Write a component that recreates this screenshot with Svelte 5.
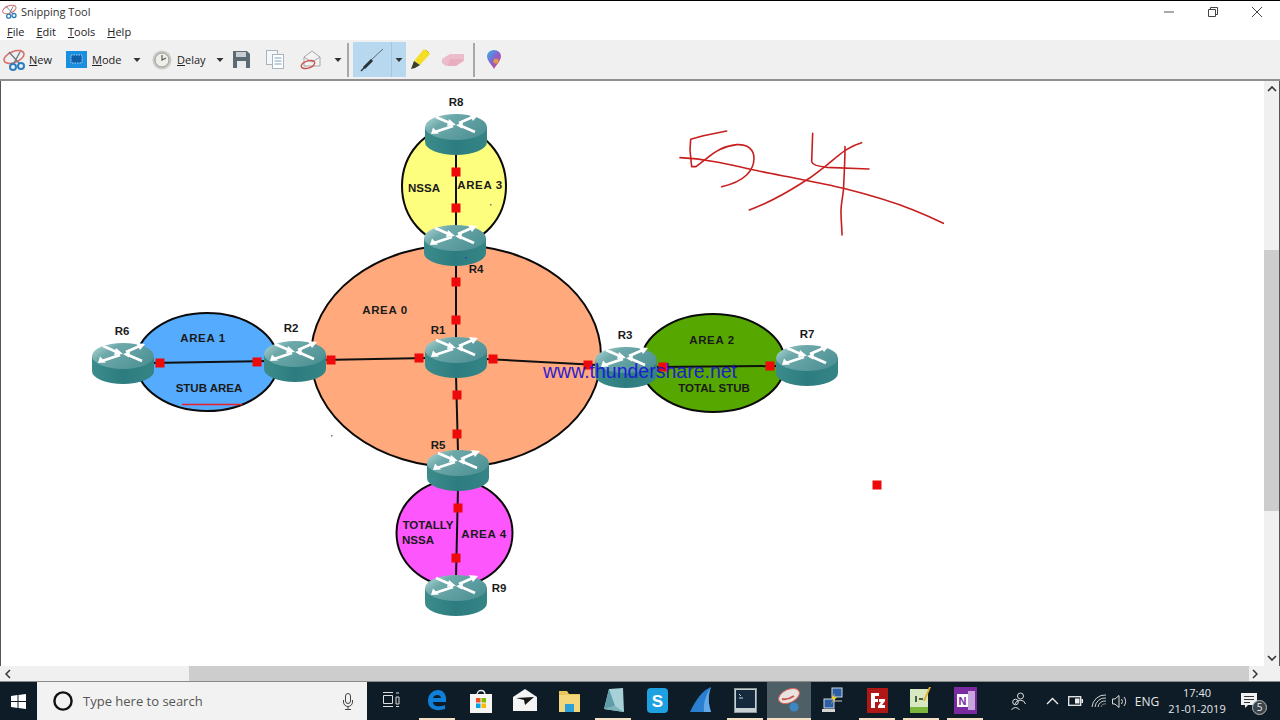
<script>
  const routers = [
    { x: 425, y: 114 }, { x: 424, y: 225 }, { x: 425, y: 337 }, { x: 427, y: 450 }, { x: 425, y: 575 },
    { x: 92, y: 343 }, { x: 264, y: 341 }, { x: 595, y: 347 }, { x: 776, y: 345 }
  ];
  const areas = [
    { cx: 456, cy: 356, rx: 145, ry: 111, fill: '#ffa97c' },
    { cx: 454, cy: 186, rx: 52, ry: 58, fill: '#fdfd7e' },
    { cx: 207, cy: 362, rx: 71, ry: 49, fill: '#55abfd' },
    { cx: 713, cy: 363, rx: 72, ry: 49, fill: '#56a800' },
    { cx: 454.5, cy: 533, rx: 58, ry: 53, fill: '#fd56fd' }
  ];
  const links = [
    [456, 150, 456, 230], [456, 262, 456, 340], [456, 375, 458, 452], [458, 488, 456, 578],
    [150, 363, 268, 361], [322, 360, 428, 358], [485, 359, 598, 365], [655, 367, 778, 366]
  ];
  const marks = [
    [456, 172], [456, 208], [456, 282], [456, 320], [457, 395], [457, 434], [458, 508], [456, 558],
    [160, 363], [257, 362], [331, 360], [419, 358], [493, 359], [588, 365], [663, 367], [770, 366], [877, 485]
  ];
  const specks = [
    [331, 435, '#777'], [490, 204, '#777'], [465, 257, '#2040c0']
  ];
  const labels = [
    ['R8', 456, 106], ['R4', 476, 273], ['R1', 438, 334], ['R5', 438, 449], ['R9', 499, 592],
    ['R6', 122, 335], ['R2', 291, 332], ['R3', 625, 339], ['R7', 807, 338],
    ['STUB AREA', 209, 392], ['TOTAL STUB', 714, 392], ['NSSA', 424, 192],
    ['TOTALLY', 428, 529], ['NSSA', 418, 544]
  ];
  const areaLabels = [
    ['AREA 0', 385, 314], ['AREA 3', 480, 189], ['AREA 1', 203, 342], ['AREA 2', 712, 344], ['AREA 4', 484, 538]
  ];
  const scribbles = [
    'M170 33 L100 47 L62 58 L60 90 L65 140 L78 140 L110 115 C135 95 160 78 200 74 C235 72 252 90 252 115 C252 150 225 185 155 200',
    'M30 113 C130 118 200 140 300 160 S460 190 520 205 S680 250 730 270 S790 295 820 310',
    'M428 40 L425 125 Q428 138 470 142 L597 147',
    'M575 68 C530 80 500 112 465 140 C440 158 430 168 410 180 C370 205 320 240 238 270',
    'M525 80 C525 130 522 170 521 200 C520 230 512 250 513 280 C514 310 516 330 516 345'
  ];
</script>

{#snippet snipIcon(w, h)}
  <svg width={w} height={h} viewBox="0 0 24 22">
    <ellipse cx="11" cy="8" rx="10.5" ry="5.5" transform="rotate(-22 11 8)" fill="none" stroke="#d9706c" stroke-width="1.6" />
    <path d="M6 3 L16 14 M17 3 L11 14" stroke="#6d7c86" stroke-width="1.4" fill="none" />
    <circle cx="18" cy="17" r="3" fill="none" stroke="#2b7fc0" stroke-width="2" />
    <circle cx="10" cy="18" r="3" fill="none" stroke="#2b7fc0" stroke-width="2" />
  </svg>
{/snippet}

{#snippet caret()}
  <svg class="caret" width="10" height="6" viewBox="0 0 10 6"><path d="M1.5 1 H8.5 L5 5 Z" fill="#333" /></svg>
{/snippet}

<div class="screen">
  <header class="title">
    {@render snipIcon(16, 15)}
    <span class="title-text">Snipping Tool</span>
    <div class="win-btns">
      <svg width="12" height="12" viewBox="0 0 12 12"><path d="M1 6 H11" stroke="#555" /></svg>
      <svg width="12" height="12" viewBox="0 0 12 12"><path d="M1.5 3.5 H8.5 V10.5 H1.5 Z M3.5 3.5 V1.5 H10.5 V8.5 H8.5" fill="none" stroke="#444" /></svg>
      <svg width="12" height="12" viewBox="0 0 12 12"><path d="M1 1 L11 11 M11 1 L1 11" stroke="#444" /></svg>
    </div>
  </header>

  <nav class="menu">
    <span><u>F</u>ile</span><span><u>E</u>dit</span><span><u>T</u>ools</span><span><u>H</u>elp</span>
  </nav>

  <div class="toolbar">
    <div class="tool w-new">{@render snipIcon(24, 22)}<span><u>N</u>ew</span></div>
    <div class="tool w-mode">
      <svg width="21" height="17" viewBox="0 0 21 17"><rect width="21" height="17" fill="#1a8fe0" /><rect x="5" y="4" width="11" height="8" fill="#0f5fa8" stroke="#9fd0f2" stroke-dasharray="1.5 1" /></svg>
      <span><u>M</u>ode</span>
    </div>
    <div class="caret-box">{@render caret()}</div>
    <div class="tool w-delay ml10">
      <svg width="20" height="20" viewBox="0 0 20 20"><circle cx="10" cy="10" r="9.5" fill="#c9c9c5" /><circle cx="10" cy="10" r="7" fill="#efefea" stroke="#9a9a96" /><path d="M10 5 V10 L14 8" fill="none" stroke="#555" stroke-width="1.2" /></svg>
      <span><u>D</u>elay</span>
    </div>
    <div class="caret-box">{@render caret()}</div>
    <svg class="ml8" width="17" height="17" viewBox="0 0 17 17"><path d="M0 0 H14 L17 3 V17 H0 Z" fill="#5c6a73" /><rect x="3" y="1" width="10" height="5" fill="#c8ced2" /><rect x="4" y="10" width="9" height="7" fill="#e8eaec" /></svg>
    <svg class="ml16" width="18" height="19" viewBox="0 0 18 19"><rect x="0.5" y="0.5" width="11" height="14" fill="#f4f6f8" stroke="#a9b4bc" /><rect x="6.5" y="4.5" width="11" height="14" fill="#fff" stroke="#a9b4bc" /><path d="M8.5 8 H15.5 M8.5 11 H15.5 M8.5 14 H15.5" stroke="#7ba3c4" /></svg>
    <svg class="ml16" width="22" height="21" viewBox="0 0 22 21"><path d="M4 8 L12 2 L20 8 V17 H4 Z" fill="#f3f3f3" stroke="#a6a6a6" /><path d="M4 8 L12 13 L20 8" fill="none" stroke="#a6a6a6" /><ellipse cx="8" cy="15.5" rx="7" ry="3.6" transform="rotate(-18 8 15.5)" fill="none" stroke="#c9544f" stroke-width="1.4" /></svg>
    <div class="caret-box ml11">{@render caret()}</div>
    <i class="sep ml4"></i>
    <div class="pen-btn">
      <div class="pen-main">
        <svg width="24" height="24" viewBox="0 0 24 24"><path d="M23 1 L10 13" stroke="#5d6b74" stroke-width="1" /><path d="M12 12 L4 20" stroke="#27333a" stroke-width="3" /><path d="M5 19 L1 23" stroke="#27333a" stroke-width="1.4" /></svg>
      </div>
      <div class="pen-arrow">{@render caret()}</div>
    </div>
    <svg class="ml4" width="20" height="21" viewBox="0 0 20 21"><path d="M14 0 L20 5 L10 16 L4 12 Z" fill="#f4dd25" /><path d="M4 12 L10 16 L5 19 L1 20 Z" fill="#3b3f2a" /><path d="M16 1 L19 4" stroke="#c9b30f" /></svg>
    <svg class="ml12" width="22" height="14" viewBox="0 0 22 14"><path d="M0 6 L8 1 H22 V8 L14 13 H4 L0 10 Z" fill="#edbccb" /><path d="M8 6 H22 L14 13 H6 Z" fill="#e3a8bb" opacity="0.7" /></svg>
    <i class="sep ml9"></i>
    <svg class="ml12" width="14" height="19" viewBox="0 0 14 19">
      <defs><linearGradient id="drop" x1="0" y1="0" x2="1" y2="1"><stop offset="0" stop-color="#2fb6e8" /><stop offset="0.5" stop-color="#8a5fd0" /><stop offset="1" stop-color="#e8455f" /></linearGradient></defs>
      <path d="M7 19 C5 15 0 11 0 6 A7 6 0 0 1 14 6 C14 11 9 15 7 19 Z" fill="url(#drop)" />
      <circle cx="9" cy="11" r="2.6" fill="#f2a92e" opacity="0.8" />
    </svg>
  </div>

  <main class="body">
    <div class="stage">
      <svg class="diagram" width="1263" height="585" viewBox="0 81 1263 585">
        <defs>
          <linearGradient id="rtop" x1="0" y1="0" x2="1" y2="0.6">
            <stop offset="0" stop-color="#b9dcdb" /><stop offset="0.35" stop-color="#6ea9aa" /><stop offset="1" stop-color="#4f9396" />
          </linearGradient>
          <linearGradient id="rbody" x1="0" y1="0" x2="1" y2="0">
            <stop offset="0" stop-color="#3c8c8c" /><stop offset="0.5" stop-color="#2d7d80" /><stop offset="1" stop-color="#358587" />
          </linearGradient>
          <g id="router">
            <path d="M0 13 V28 A31 13 0 0 0 62 28 V13 Z" fill="url(#rbody)" />
            <ellipse cx="31" cy="13" rx="31" ry="13" fill="url(#rtop)" />
            <path d="M11 3 L27 10 M50 2 L34 9 M10 18 L28 12 M50 18 L34 11" stroke="#fff" stroke-width="2.8" />
            <path d="M24 5 L31 11 L22 12 Z M44 0 L53 1 L48 7 Z M8 13.5 L6 20 L14 19.5 Z M38 8.5 L31 11 L37 14.5 Z" fill="#fff" />
          </g>
        </defs>

        {#each areas as a}
          <ellipse cx={a.cx} cy={a.cy} rx={a.rx} ry={a.ry} fill={a.fill} stroke="#0a0a0a" stroke-width="2" />
        {/each}
        {#each links as l}
          <line x1={l[0]} y1={l[1]} x2={l[2]} y2={l[3]} stroke="#101010" stroke-width="2" />
        {/each}
        {#each routers as r}
          <use href="#router" x={r.x} y={r.y} />
        {/each}
        {#each marks as m}
          <rect x={m[0] - 4.5} y={m[1] - 4.5} width="9" height="9" fill="#ee0a0a" />
        {/each}
        {#each specks as s}
          <rect x={s[0]} y={s[1]} width="1.5" height="1.5" fill={s[2]} />
        {/each}
        {#each labels as t}
          <text x={t[1]} y={t[2]} class="lbl">{t[0]}</text>
        {/each}
        {#each areaLabels as t}
          <text x={t[1]} y={t[2]} class="lbl big">{t[0]}</text>
        {/each}
        <line x1="182" y1="404.5" x2="242" y2="404.5" stroke="#e8202c" stroke-width="1.6" />
        <g transform="translate(670 120) scale(0.3333)" fill="none" stroke="#c81e1e" stroke-width="4.8" stroke-linecap="round" stroke-linejoin="round">
          {#each scribbles as d}
            <path {d} />
          {/each}
        </g>
        <text x="640" y="378" class="wm">www.thundershare.net</text>
      </svg>
    </div>
    <aside class="vscroll">
      <svg width="10" height="6" viewBox="0 0 10 6"><path d="M1 5 L5 1 L9 5" fill="none" stroke="#333" stroke-width="1.6" /></svg>
      <div class="vtrack"><div class="vthumb"></div></div>
      <svg width="10" height="6" viewBox="0 0 10 6"><path d="M1 1 L5 5 L9 1" fill="none" stroke="#333" stroke-width="1.6" /></svg>
    </aside>
  </main>

  <div class="hscroll">
    <svg width="6" height="10" viewBox="0 0 6 10"><path d="M5 1 L1 5 L5 9" fill="none" stroke="#333" stroke-width="1.5" /></svg>
    <div class="htrack"><div class="hthumb"></div></div>
    <svg width="6" height="10" viewBox="0 0 6 10"><path d="M1 1 L5 5 L1 9" fill="none" stroke="#333" stroke-width="1.5" /></svg>
  </div>

  <footer class="taskbar">
    <div class="start">
      <svg width="15" height="15" viewBox="0 0 15 15"><path d="M0 2 L6.5 1 V7 H0 Z M7.5 1 L15 0 V7 H7.5 Z M0 8 H6.5 V14 L0 13 Z M7.5 8 H15 V15 L7.5 14 Z" fill="#fff" /></svg>
    </div>
    <div class="search">
      <svg width="22" height="22" viewBox="0 0 22 22"><circle cx="11" cy="11" r="8.6" fill="none" stroke="#111" stroke-width="2.4" /></svg>
      <span>Type here to search</span>
      <svg class="mic" width="10" height="17" viewBox="0 0 10 17"><rect x="2.5" y="0.5" width="5" height="10" rx="2.5" fill="none" stroke="#444" /><path d="M0.5 7 V9 A4.5 4.5 0 0 0 9.5 9 V7 M5 13.5 V16 M2 16.5 H8" fill="none" stroke="#444" /></svg>
    </div>
    <div class="app first">
      <svg width="17" height="16" viewBox="0 0 17 16"><path d="M0.5 3.5 H9.5 V11.5 H0.5 Z" fill="none" stroke="#ddd" /><path d="M0 0.5 H10 M0 14.5 H10 M13 1 H16 M13 5 H16 V12 H13 Z M13 14.5 H16" fill="none" stroke="#ddd" /></svg>
    </div>
    <div class="app on">
      <svg width="20" height="21" viewBox="0 0 20 21"><path d="M19 12 H6 C6 16 11 18 18 15 V19 C9 22 1 19 1 11 C1 4 6 0 11 0 C16 0 20 4 19 12 Z M6 8 H14 C14 4 7 4 6 8 Z" fill="#0f7fd8" /></svg>
    </div>
    <div class="app">
      <svg width="22" height="25" viewBox="0 0 22 25"><path d="M7 7 C7 1 15 1 15 7" fill="none" stroke="#eee" stroke-width="1.4" /><rect y="6" width="22" height="19" fill="#f4f4f4" /><rect x="6" y="10" width="4.5" height="4.5" fill="#f25022" /><rect x="11.5" y="10" width="4.5" height="4.5" fill="#7fba00" /><rect x="6" y="15.5" width="4.5" height="4.5" fill="#00a4ef" /><rect x="11.5" y="15.5" width="4.5" height="4.5" fill="#ffb900" /></svg>
    </div>
    <div class="app">
      <svg width="24" height="22" viewBox="0 0 24 22"><path d="M0 8 L12 0 L24 8 V22 H0 Z" fill="#f4f4f4" /><path d="M3 9 L21 8 L12 16 L11 11 Z" fill="#161616" /></svg>
    </div>
    <div class="app">
      <svg width="21" height="23" viewBox="0 0 21 23"><path d="M0 2 H8 L10 5 H21 V23 H0 Z" fill="#e8c65a" /><rect x="0" y="6" width="21" height="17" fill="#f5d77b" /><rect x="6" y="15" width="9" height="8" fill="#2a9fd8" /></svg>
    </div>
    <div class="app on">
      <svg width="21" height="25" viewBox="0 0 21 25"><path d="M6 1 L20 0 L21 24 L1 21 Z" fill="#a8d0d8" /><path d="M6 1 L1 21 L12 18 Z" fill="#5f9ca8" /><path d="M12 18 L21 24 L1 21 Z" fill="#7db3bd" /></svg>
    </div>
    <div class="app">
      <svg width="21" height="25" viewBox="0 0 21 25"><path d="M4 0 H17 A4 4 0 0 1 21 4 V21 A4 4 0 0 1 17 25 H4 A4 4 0 0 1 0 21 V4 A4 4 0 0 1 4 0 Z" fill="#1ea1e0" /><text x="10.5" y="18.5" class="sk">S</text></svg>
    </div>
    <div class="app">
      <svg width="22" height="26" viewBox="0 0 22 26"><path d="M21 0 C13 3 6 12 0 25 H21 C18 16 18 8 21 0 Z" fill="#2a7fd0" /><path d="M21 0 C16 8 13 16 14 25 H21 C18 16 18 8 21 0 Z" fill="#63a8e8" /></svg>
    </div>
    <div class="app on">
      <svg width="23" height="25" viewBox="0 0 23 25"><rect x="0.5" y="0.5" width="22" height="24" fill="#c8d0d4" stroke="#8c979c" /><rect x="2" y="2" width="19" height="18" fill="#152a3c" /><path d="M5 6 L7 8 M5 10 H9" stroke="#cfd8dc" /></svg>
    </div>
    <div class="app active">
      <svg width="23" height="24" viewBox="0 0 23 24"><ellipse cx="11" cy="8" rx="11" ry="6.5" transform="rotate(-25 11 8)" fill="#e9e4e0" stroke="#d66" /><path d="M4 11 Q10 12 16 8" fill="none" stroke="#c55" stroke-width="2" /><circle cx="16" cy="19" r="4.5" fill="#3c87c2" /></svg>
    </div>
    <div class="app">
      <svg width="22" height="26" viewBox="0 0 22 26"><rect x="10" y="1" width="10" height="9" fill="#2d5ea8" stroke="#cfd8e0" /><path d="M12 10 V14 H20" fill="none" stroke="#ccc" /><rect x="2" y="12" width="10" height="9" fill="#2d5ea8" stroke="#cfd8e0" /><rect x="0" y="22" width="13" height="3" fill="#d5d5d5" /><path d="M13 6 L9 12 L12 12 L8 18 L15 10 L12 10 Z" fill="#f0d020" /></svg>
    </div>
    <div class="app on">
      <svg width="21" height="25" viewBox="0 0 21 25"><rect width="21" height="25" fill="#b01717" /><path d="M4 5 H12 V8 H8 V11 H11 V14 H8 V20 H4 Z M12 11 H18 V13 L15 17 H18 V20 H11 V18 L14 14 H12 Z" fill="#fff" /></svg>
    </div>
    <div class="app on">
      <svg width="22" height="27" viewBox="0 0 22 27"><rect y="2" width="18" height="24" fill="#d8e8c0" /><rect y="20" width="18" height="6" fill="#7cb63c" /><path d="M6 9 V15 M9 12 H13" stroke="#45603a" stroke-width="2" /><path d="M21 0 L15 14 L13 14 L19 0 Z" fill="#e8b02e" /></svg>
    </div>
    <div class="app on">
      <svg width="23" height="27" viewBox="0 0 23 27"><rect width="23" height="27" fill="#7b2ba0" /><rect x="14" y="4" width="7" height="19" fill="#c9a6da" /><rect x="3" y="7" width="11" height="13" fill="#fff" /><text x="8.5" y="18" class="on-n">N</text></svg>
    </div>

    <div class="tray">
      <div class="people">
        <svg width="15" height="19" viewBox="0 0 15 19"><circle cx="9.5" cy="4" r="3" fill="none" stroke="#ddd" /><path d="M4 12 A5.5 5.5 0 0 1 14.5 12" fill="none" stroke="#ddd" /><circle cx="4.5" cy="10" r="2.8" fill="none" stroke="#ddd" /><path d="M0.5 18 A4.5 4.5 0 0 1 8.5 18" fill="none" stroke="#ddd" /></svg>
      </div>
      <div class="chev">
        <svg width="13" height="8" viewBox="0 0 13 8"><path d="M1 7 L6.5 1.5 L12 7" fill="none" stroke="#eee" stroke-width="1.3" /></svg>
      </div>
      <div class="batt">
        <svg width="15" height="10" viewBox="0 0 15 10"><rect x="0.7" y="0.7" width="12" height="8.6" fill="none" stroke="#eee" stroke-width="1.3" /><rect x="7" y="2.5" width="4.5" height="5" fill="#eee" /><rect x="13.5" y="3" width="1.5" height="4" fill="#eee" /></svg>
      </div>
      <div class="wifi">
        <svg width="16" height="14" viewBox="0 0 16 14"><path d="M1 13 A13 13 0 0 1 15 1 M4 13 A10 10 0 0 1 15 4 M7 13 A7 7 0 0 1 15 7" fill="none" stroke="#cfcfcf" /><path d="M10 13 A4 4 0 0 1 15 10" fill="none" stroke="#888" /></svg>
      </div>
      <div class="vol">
        <svg width="16" height="15" viewBox="0 0 16 15"><path d="M0.5 5 H3 L7 1.5 V13.5 L3 10 H0.5 Z" fill="none" stroke="#ddd" /><path d="M9.5 5 A4 4 0 0 1 9.5 10 M12 3 A7 7 0 0 1 12 12" fill="none" stroke="#ddd" /></svg>
      </div>
      <div class="eng">ENG</div>
      <div class="clock"><span>17:40</span><span>21-01-2019</span></div>
      <div class="notif">
        <svg width="16" height="16" viewBox="0 0 16 16"><path d="M0 0 H16 V12 H7 L4 15 V12 H0 Z" fill="#f0f0f0" /><path d="M3 3.5 H13 M3 6.5 H13 M3 9.5 H9" stroke="#333" /></svg>
        <b>5</b>
      </div>
    </div>
  </footer>
</div>

<style>
  :global(body) { margin: 0; background: #fff; }
  .screen {
    width: 1280px; height: 720px; display: flex; flex-direction: column; overflow: hidden;
    font-family: "Open Sans", "Noto Sans", sans-serif; font-size: 11px; color: #222; background: #fff;
  }
  .title {
    height: 21px; border-top: 1px solid #000; display: flex; align-items: center; padding-left: 2px; gap: 3px; flex: none;
  }
  .title-text { color: #333; }
  .win-btns { margin-left: auto; display: flex; gap: 32px; padding-right: 17px; }
  .menu { height: 18px; flex: none; display: flex; gap: 12px; padding-left: 7px; align-items: center; color: #222; }
  .toolbar {
    height: 39px; flex: none; background: #f0f0f0; border-bottom: 2px solid #8f8f8f;
    display: flex; align-items: center; padding-left: 3px;
  }
  .tool { display: flex; align-items: center; flex: none; gap: 2px; }
  .w-new { width: 63px; }
  .w-mode { width: 66px; gap: 5px; }
  .w-delay { width: 63px; gap: 5px; }
  .caret-box { width: 10px; display: flex; justify-content: center; flex: none; }
  .caret { display: block; }
  .ml4 { margin-left: 4px; } .ml8 { margin-left: 8px; } .ml9 { margin-left: 9px; }
  .ml10 { margin-left: 10px; } .ml11 { margin-left: 11px; } .ml12 { margin-left: 12px; } .ml16 { margin-left: 16px; }
  .toolbar svg { flex: none; }
  .sep { display: block; width: 2px; height: 34px; background: #a8a8a8; flex: none; }
  .pen-btn { margin-left: 4px; width: 53px; height: 35px; display: flex; background: #b8d8f0; flex: none; }
  .pen-main { width: 38px; display: flex; align-items: center; justify-content: center; border-right: 1px solid #a3c6e0; }
  .pen-arrow { flex: 1; display: flex; align-items: center; justify-content: center; }

  .body { flex: 1; min-height: 0; display: flex; border-left: 1px solid #555; border-right: 1px solid #555; }
  .stage { position: relative; width: 1263px; overflow: hidden; background: #fff; }
  .diagram { position: absolute; left: -1px; top: 0; display: block; }
  .lbl { font: bold 11.5px "Liberation Sans", sans-serif; fill: #1a1a1a; text-anchor: middle; }
  .lbl.big { letter-spacing: 0.6px; }
  .wm { font: 19.5px "Liberation Sans", sans-serif; fill: #1a14d8; text-anchor: middle; opacity: 0.92; }
  .vscroll { width: 15px; background: #f0f0f0; display: flex; flex-direction: column; align-items: center; padding: 5px 0 5px; box-sizing: border-box; }
  .vtrack { flex: 1; width: 100%; padding-top: 158px; box-sizing: border-box; }
  .vthumb { height: 261px; background: #cdcdcd; }

  .hscroll { height: 15px; flex: none; background: #f0f0f0; border-bottom: 1px solid #8a8a8a; display: flex; align-items: center; padding: 0 22px 0 5px; }
  .htrack { flex: 1; height: 100%; padding-left: 178px; padding-right: 3px; }
  .hthumb { height: 100%; background: #cdcdcd; }

  .taskbar { height: 38px; flex: none; background: #0d1c26; display: flex; align-items: stretch; color: #e6e6e6; }
  .start { width: 37px; display: flex; align-items: center; justify-content: center; }
  .search { width: 330px; background: #f2f2f2; display: flex; align-items: center; padding-left: 15px; box-sizing: border-box; gap: 9px; color: #555; font-size: 13px; }
  .mic { margin-left: auto; margin-right: 14px; }
  .app { width: 36px; margin: 0 4px; display: flex; align-items: center; justify-content: center; box-sizing: border-box; border-bottom: 2px solid transparent; flex: none; }
  .app.first { width: 40px; }
  .app.on { border-bottom-color: #f7dfc4; }
  .app.active { width: 44px; margin: 0; background: #4f5f66; border-bottom-color: #f7dfc4; }
  .sk { font: bold 17px "Liberation Sans", sans-serif; fill: #fff; text-anchor: middle; }
  .on-n { font: bold 11px "Liberation Sans", sans-serif; fill: #7b2ba0; text-anchor: middle; }
  .tray { margin-left: auto; display: flex; align-items: stretch; width: 280px; flex: none; }
  .tray > div { display: flex; align-items: center; justify-content: center; flex: none; }
  .people { width: 36px; margin-right: 4px; }
  .chev { width: 24px; }
  .batt { width: 22px; }
  .wifi { width: 26px; }
  .vol { width: 16px; }
  .eng { width: 38px; font-size: 12px; }
  .tray > .clock { width: 62px; flex-direction: column; font-size: 11px; line-height: 16px; }
  .notif { width: 42px; position: relative; }
  .notif b {
    position: absolute; left: 24px; top: 18px; width: 15px; height: 15px; border-radius: 50%;
    background: #3a444b; border: 1px solid #bbb; box-sizing: border-box; font: 10px/13px "Open Sans", sans-serif; text-align: center; color: #eee;
  }
</style>
